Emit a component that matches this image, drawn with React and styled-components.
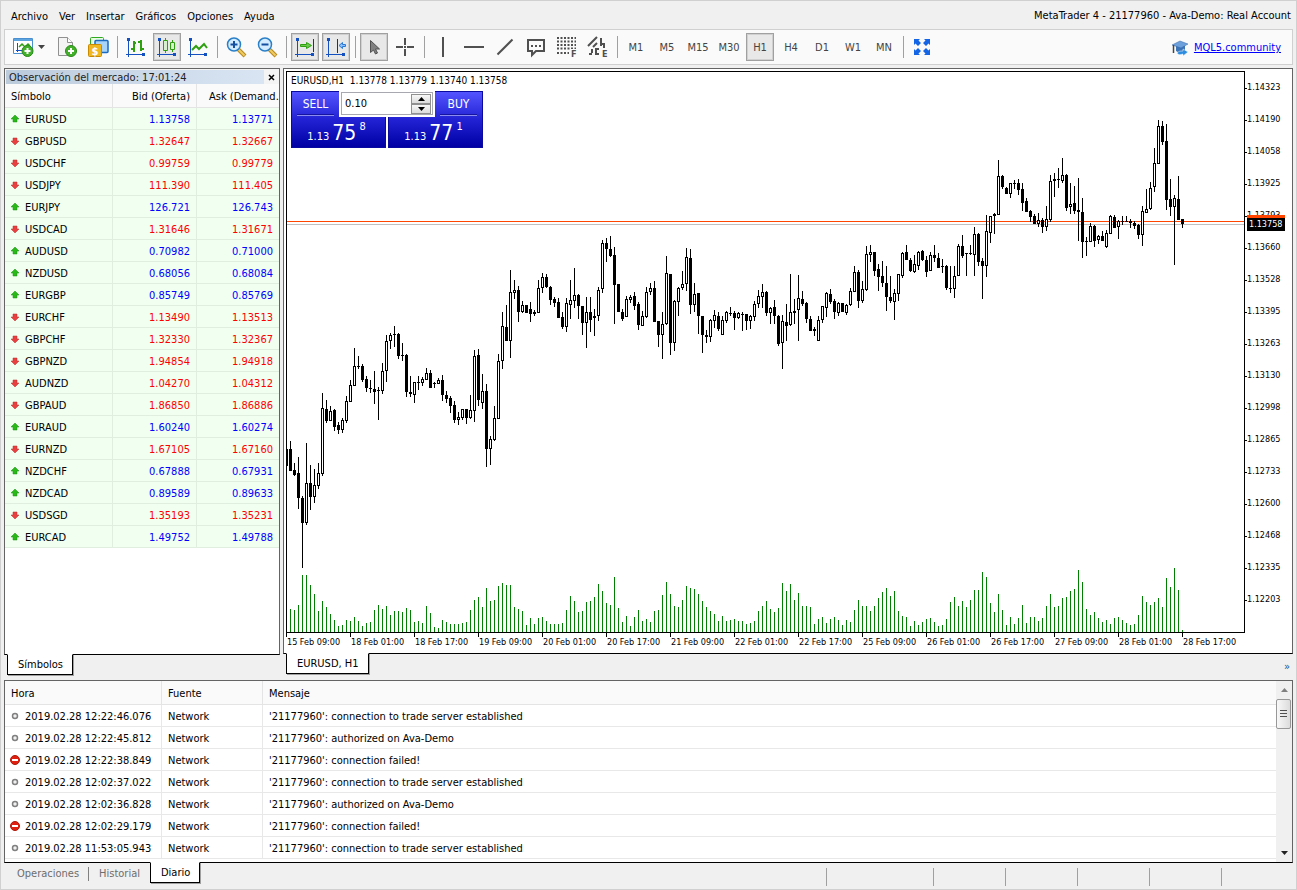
import React from "react";
import styled, { createGlobalStyle, css } from "styled-components";

const GlobalStyle = createGlobalStyle`
  * {
    box-sizing: border-box;
  }
  body {
    margin: 0;
    background: #f0f0f0;
    color: #000;
    font-family: "DejaVu Sans Condensed", Tahoma, sans-serif;
    font-size: 11px;
    line-height: 14px;
  }
  button, input {
    font: inherit;
    color: inherit;
  }
`;

const MENU = ["Archivo", "Ver", "Insertar", "Gráficos", "Opciones", "Ayuda"];
const TIMEFRAMES = ["M1", "M5", "M15", "M30", "H1", "H4", "D1", "W1", "MN"];

const SYMBOLS = [
  ["EURUSD", "1.13758", "1.13771", true],
  ["GBPUSD", "1.32647", "1.32667", false],
  ["USDCHF", "0.99759", "0.99779", false],
  ["USDJPY", "111.390", "111.405", false],
  ["EURJPY", "126.721", "126.743", true],
  ["USDCAD", "1.31646", "1.31671", false],
  ["AUDUSD", "0.70982", "0.71000", true],
  ["NZDUSD", "0.68056", "0.68084", true],
  ["EURGBP", "0.85749", "0.85769", true],
  ["EURCHF", "1.13490", "1.13513", false],
  ["GBPCHF", "1.32330", "1.32367", false],
  ["GBPNZD", "1.94854", "1.94918", false],
  ["AUDNZD", "1.04270", "1.04312", false],
  ["GBPAUD", "1.86850", "1.86886", false],
  ["EURAUD", "1.60240", "1.60274", true],
  ["EURNZD", "1.67105", "1.67160", false],
  ["NZDCHF", "0.67888", "0.67931", true],
  ["NZDCAD", "0.89589", "0.89633", true],
  ["USDSGD", "1.35193", "1.35231", false],
  ["EURCAD", "1.49752", "1.49788", true]
];

const LOG = [
  ["2019.02.28 12:22:46.076", "connection to trade server established"],
  ["2019.02.28 12:22:45.812", "authorized on Ava-Demo"],
  ["2019.02.28 12:22:38.849", "connection failed!"],
  ["2019.02.28 12:02:37.022", "connection to trade server established"],
  ["2019.02.28 12:02:36.828", "authorized on Ava-Demo"],
  ["2019.02.28 12:02:29.179", "connection failed!"],
  ["2019.02.28 11:53:05.943", "connection to trade server established"]
];

const PRICES = [
  "1.14323", "1.14190", "1.14058", "1.13925", "1.13793", "1.13660",
  "1.13528", "1.13395", "1.13263", "1.13130", "1.12998", "1.12865",
  "1.12733", "1.12600", "1.12468", "1.12335", "1.12203"
];

const TIMES = [
  "15 Feb 09:00", "18 Feb 01:00", "18 Feb 17:00", "19 Feb 09:00",
  "20 Feb 01:00", "20 Feb 17:00", "21 Feb 09:00", "22 Feb 01:00",
  "22 Feb 17:00", "25 Feb 09:00", "26 Feb 01:00", "26 Feb 17:00",
  "27 Feb 09:00", "28 Feb 01:00", "28 Feb 17:00"
];

// high, body top, body bottom, low, rising
const CANDLES = [
  [449,449,466,466,0],[441,449,471,471,0],[463,470,475,476,0],[457,473,498,509,0],[496,498,523,568,0],
  [443,483,523,525,1],[465,483,497,510,0],[469,485,497,503,1],[463,473,486,489,1],[393,408,474,476,1],
  [400,409,421,423,0],[406,411,421,421,1],[409,410,427,431,0],[422,425,430,434,0],[418,420,430,433,1],
  [396,401,421,423,1],[380,385,402,402,1],[348,366,386,386,1],[356,366,367,369,0],[364,366,380,382,0],
  [376,379,388,392,0],[380,388,389,393,0],[371,389,392,404,0],[387,390,391,420,0],[363,371,391,394,1],
  [335,341,371,382,1],[333,335,341,349,1],[326,334,335,347,0],[333,334,356,359,0],[343,355,356,361,0],
  [354,355,392,397,0],[376,392,394,397,0],[382,382,395,403,1],[376,382,383,390,0],[377,379,383,386,1],
  [368,373,380,380,1],[370,373,388,388,0],[382,383,384,388,0],[378,380,384,384,1],[375,380,395,401,0],
  [391,395,399,403,0],[396,398,406,413,0],[401,405,420,423,0],[412,417,420,425,1],[409,409,418,420,1],
  [409,409,418,424,0],[395,410,418,419,1],[350,356,411,422,1],[349,355,400,406,0],[374,391,403,409,1],
  [384,391,449,467,0],[436,439,449,465,1],[406,418,440,441,1],[354,361,419,419,1],[312,326,361,369,1],
  [305,327,341,341,0],[270,292,341,358,1],[280,290,293,299,1],[286,290,312,322,0],[301,305,312,313,1],
  [305,305,313,313,0],[302,309,314,322,0],[310,312,314,316,0],[280,288,313,313,1],[273,277,288,293,1],
  [274,277,287,288,0],[286,287,300,305,0],[297,299,303,307,0],[298,302,318,318,0],[312,317,327,329,0],
  [298,303,327,332,1],[280,300,305,319,1],[268,295,301,308,1],[294,295,306,319,0],[306,306,323,335,0],
  [297,312,323,348,1],[297,312,320,332,0],[309,316,318,336,0],[287,290,316,321,1],[240,243,289,293,1],
  [238,243,249,262,0],[236,249,256,257,0],[247,255,285,324,0],[284,284,312,312,0],[309,312,319,321,0],
  [296,299,317,317,1],[295,297,300,303,1],[292,296,306,310,0],[302,304,325,330,0],[311,316,326,326,1],
  [287,292,317,318,1],[283,288,292,295,1],[281,288,322,322,0],[321,321,335,347,0],[312,324,335,359,1],
  [256,273,324,325,1],[274,274,343,355,0],[300,301,343,351,1],[287,288,302,316,1],[271,284,288,290,1],
  [248,257,284,291,1],[249,258,305,314,0],[283,294,305,312,1],[293,293,316,334,0],[316,316,335,353,0],
  [330,335,337,343,0],[319,320,337,342,1],[310,315,321,328,1],[312,316,329,331,0],[316,320,335,335,1],
  [311,312,321,323,1],[307,313,314,316,0],[311,313,318,330,0],[312,313,318,319,1],[312,314,315,331,0],
  [314,314,321,330,0],[315,316,321,329,1],[301,304,317,321,1],[290,296,304,308,1],[284,292,297,308,1],
  [291,292,313,316,0],[307,308,313,324,1],[300,307,316,324,0],[315,316,344,346,0],[315,321,343,369,1],
  [304,322,326,341,0],[274,312,325,326,1],[299,311,313,324,0],[275,298,310,341,1],[291,299,304,306,0],
  [302,303,319,323,0],[316,319,331,331,0],[327,329,331,336,0],[316,320,341,341,1],[306,306,320,323,1],
  [292,293,308,317,1],[289,294,302,304,0],[299,301,312,319,0],[302,303,313,316,1],[303,303,312,312,0],
  [304,305,313,315,1],[288,291,305,306,1],[266,272,292,292,1],[270,272,301,308,0],[281,289,301,303,1],
  [246,254,290,291,1],[245,252,255,262,1],[252,252,271,276,0],[264,269,277,291,0],[261,276,283,287,0],
  [266,283,297,311,0],[276,297,301,303,0],[289,293,302,320,1],[274,274,294,301,1],[252,253,276,278,1],
  [245,252,260,260,0],[258,260,271,272,0],[255,264,272,273,1],[251,252,266,270,1],[250,251,260,261,0],
  [256,260,272,277,0],[252,255,271,271,1],[245,255,258,262,0],[253,258,268,268,0],[259,266,267,273,0],
  [265,266,288,290,0],[266,288,289,293,0],[266,276,289,298,1],[244,246,276,276,1],[235,246,256,258,0],
  [253,253,254,276,0],[245,253,254,255,0],[227,234,255,276,1],[233,234,262,266,0],[258,261,266,299,0],
  [215,231,266,277,1],[216,216,233,243,1],[213,214,216,234,0],[160,176,215,215,1],[175,176,187,189,0],
  [187,188,194,194,0],[183,183,194,198,1],[180,183,184,189,0],[179,183,190,195,0],[183,189,203,211,0],
  [198,201,212,212,0],[210,211,217,222,0],[214,216,224,224,0],[213,220,224,227,1],[218,220,227,233,0],
  [206,219,227,231,1],[175,181,220,222,1],[173,179,181,197,0],[168,179,180,188,0],[158,175,181,183,1],
  [174,175,208,211,0],[183,204,207,214,1],[186,203,211,214,0],[178,210,212,241,0],[198,212,242,258,0],
  [237,241,242,256,0],[223,226,242,242,1],[225,226,241,247,0],[235,236,240,244,1],[231,236,241,241,0],
  [230,233,247,248,1],[215,216,234,234,1],[215,217,228,228,0],[220,221,227,239,1],[216,221,222,225,0],
  [216,221,222,222,0],[219,221,223,228,0],[221,223,226,229,0],[224,225,235,239,0],[206,211,235,246,1],
  [189,209,213,213,1],[182,188,209,210,1],[148,163,187,192,1],[120,126,164,164,1],[121,126,142,145,0],
  [124,141,200,210,0],[179,199,207,216,0],[195,198,207,265,1],[176,199,220,220,0],[219,219,224,228,0]
];

const VOLUMES = [
  0,23,22,27,57,57,47,38,21,31,25,18,12,6,7,12,11,15,11,6,9,10,22,27,23,
  26,17,21,21,20,24,22,10,11,9,26,19,5,4,12,10,8,8,8,9,10,22,32,35,25,
  44,31,32,46,49,47,47,25,23,21,7,14,8,14,15,11,8,8,8,9,22,36,31,20,21,
  30,31,35,48,41,29,27,55,24,10,16,6,15,22,11,13,10,21,22,37,50,38,26,25,32,
  46,44,43,38,31,25,21,18,11,16,11,12,13,11,11,8,9,11,21,26,31,23,20,24,49,
  41,48,32,39,26,26,25,8,13,15,9,13,15,12,7,12,10,22,32,26,26,21,26,34,40,
  44,36,41,21,16,15,6,11,7,10,13,14,10,6,7,13,30,35,26,31,25,32,42,42,60,
  55,29,20,38,22,7,15,8,14,27,9,15,15,11,14,26,38,25,26,34,35,41,43,62,50,
  23,17,20,14,10,12,8,14,15,12,9,7,8,17,36,30,27,30,34,25,54,45,64,42,2
];

const Window = styled.div`
  display: flex;
  flex-direction: column;
  height: 100vh;
  min-height: 600px;
  border: 1px solid #d0d0d0;
  padding: 0 3px;
`;

const MenuBar = styled.header`
  display: flex;
  justify-content: space-between;
  align-items: center;
  height: 28px;
  padding: 2px 2px 0 7px;
`;

const MenuItems = styled.nav`
  display: flex;
  gap: 11px;
`;

const MenuItem = styled.button`
  border: 0;
  padding: 2px 0 0;
  background: none;
`;

const Toolbar = styled.div`
  display: flex;
  align-items: center;
  gap: 3px;
  height: 36px;
  padding: 0 11px 0 3px;
  border: 1px solid #d0d0d0;
  background: #fafafa;
  flex: none;
`;

const ToolButton = styled.button`
  display: flex;
  align-items: center;
  justify-content: center;
  gap: 5px;
  width: ${props => (props.$wide ? 42 : 28)}px;
  height: 28px;
  padding: 0;
  border: 1px solid transparent;
  background: none;
  color: #444;
  ${props =>
    props.$pressed &&
    css`
      border-color: #a0a0a0;
      background: #e8e8e8;
      box-shadow: inset 0 0 0 1px #d0d0d0;
    `}
`;

const PeriodButton = styled(ToolButton)`
  padding-top: 2px;
`;

const Separator = styled.span`
  width: 1px;
  height: 22px;
  margin: 0 1px 0 2px;
  background: #a0a0a0;
`;

const Community = styled.a`
  display: flex;
  align-items: center;
  gap: 5px;
  margin-left: auto;
  padding-top: 2px;
  color: #00f;
`;

const Workspace = styled.main`
  display: grid;
  grid-template-columns: 276px minmax(0, 1fr);
  gap: 3px;
  flex: 1;
  min-height: 0;
  padding-top: 3px;
`;

const Column = styled.section`
  display: flex;
  flex-direction: column;
  min-width: 0;
  min-height: 0;
`;

const Panel = styled.div`
  flex: 1;
  min-height: 0;
  overflow: hidden;
  border: 1px solid #646464;
  border-bottom-color: #000;
  background: #fff;
`;

const TabStrip = styled.div`
  display: flex;
  align-items: flex-start;
  flex: none;
  height: ${props => props.$height}px;
  padding-left: ${props => props.$inset}px;
`;

const Tab = styled.button`
  height: 21px;
  margin-top: -1px;
  padding: 1px 9px 0 10px;
  border: 1px solid #000;
  border-top-color: #fff;
  background: #fff;
  box-shadow: 1px 1px 0 #a0a0a0;
`;

const PlainTab = styled.button`
  height: 14px;
  margin-top: 4px;
  padding: 0 9px 0 10px;
  border: 0;
  border-right: 1px solid ${props => (props.$last ? "transparent" : "#808080")};
  background: none;
  color: #6d6d6d;
`;

const MoreButton = styled.button`
  margin: 6px 3px 0 auto;
  padding: 0;
  border: 0;
  background: none;
  color: #0a5a9c;
`;

const PanelTitle = styled.div`
  display: flex;
  justify-content: space-between;
  height: 15px;
  padding: 1px 0 0 1px;
  background: #f4f4f4;
  color: #222;
`;

const PanelName = styled.span`
  flex: 1;
  padding-left: 3px;
  background: linear-gradient(90deg, #bccbdc, #d9e5f3);
  line-height: 16px;
`;

const CloseButton = styled.button`
  display: flex;
  align-items: center;
  justify-content: center;
  width: 15px;
  padding: 0;
  border: 0;
  background: none;
`;

const Table = styled.table`
  width: 100%;
  border-collapse: separate;
  border-spacing: 0;
  table-layout: fixed;
`;

const Head = styled.th`
  height: 24px;
  padding: 2px 6px 0;
  border-bottom: 1px solid #e4e4e4;
  border-right: 1px solid #e4e4e4;
  background: #fafafa;
  font-weight: normal;
  text-align: ${props => props.$align || "left"};
  white-space: nowrap;
  overflow: hidden;
  &:last-child {
    border-right: 0;
  }
`;

const ClippedHead = styled(Head)`
  padding: 2px 1px 0 12px;
`;

const Cell = styled.td`
  height: 22px;
  padding: 2px 6px 0;
  border-bottom: 1px solid #e8e8e8;
  border-right: 1px solid #e8e8e8;
  white-space: nowrap;
  &:last-child {
    border-right: 0;
  }
`;

const QuoteCell = styled(Cell)`
  background: #f0fff0;
  border-color: #e0eee0;
`;

const PriceCell = styled(QuoteCell)`
  text-align: right;
  color: ${props => (props.$up ? "#00f" : "#f00")};
`;

const Marked = styled.span`
  display: flex;
  align-items: center;
  gap: 5px;
  margin-left: -1px;
  svg {
    flex: none;
    margin-bottom: 2px;
  }
`;

const ChartPanel = styled(Panel)`
  display: grid;
  grid-template-columns: minmax(0, 1fr) 47px;
  grid-template-rows: minmax(0, 1fr) 20px;
  padding: 2px 0 0 2px;
`;

const Plot = styled.div`
  position: relative;
  border: 1px solid #000;
  overflow: hidden;
`;

const Drawing = styled.svg`
  display: block;
  width: 100%;
  height: 100%;
`;

const ChartCaption = styled.div`
  position: absolute;
  left: 4px;
  top: 2px;
  font-size: 10px;
  white-space: pre;
`;

const PriceAxis = styled.ul`
  position: relative;
  margin: 0;
  padding: 1px 0 0;
  list-style: none;
  overflow: hidden;
`;

const PriceMark = styled.li`
  display: flex;
  height: 32px;
  font-size: 9px;
  line-height: 30px;
  &::before {
    content: "";
    width: 2px;
    height: 1px;
    margin-top: 16px;
    background: #000;
  }
`;

const PriceTag = styled.div`
  position: absolute;
  left: 2px;
  top: 144px;
  width: 38px;
  padding-left: 2px;
  border-top: 3px solid #ff4500;
  background: #000;
  color: #fff;
  font-size: 9px;
  line-height: 13px;
`;

const TimeAxis = styled.ul`
  display: flex;
  grid-column: 1 / 3;
  margin: 0;
  padding: 0;
  list-style: none;
`;

const TimeMark = styled.li`
  flex: none;
  width: 64px;
  padding: 2px 0 0 1px;
  font-size: 9px;
  line-height: 14px;
  white-space: nowrap;
  background: linear-gradient(#000, #000) 0 0 / 1px 4px no-repeat;
`;

const TradePanel = styled.div`
  position: absolute;
  left: 4px;
  top: 19px;
  display: flex;
  gap: 2px;
  background: #fff;
`;

const TradeButton = styled.button`
  display: flex;
  flex-direction: column;
  align-items: ${props => (props.$right ? "flex-end" : "flex-start")};
  width: 95px;
  height: 57px;
  padding: 0;
  border: 1px solid #0a0aa0;
  background: linear-gradient(#5454ff, #2222d4 50%, #0000a4);
  color: #fff;
`;

const TradeSide = styled.span`
  width: 37px;
  height: 24px;
  margin: 0 5px;
  border-bottom: 1px solid #8c8cf0;
  box-shadow: inset 0 -1px 0 #1414a0;
  font-size: 12px;
  line-height: 24px;
`;

const TradePrice = styled.span`
  display: flex;
  align-items: flex-end;
  justify-content: center;
  gap: 3px;
  align-self: stretch;
  height: 30px;
  padding-right: 4px;
  line-height: 18px;
`;

const Pips = styled.b`
  font-size: 21px;
  font-weight: normal;
  line-height: 26px;
`;

const Point = styled.sup`
  align-self: flex-start;
  font-size: 11px;
  line-height: 22px;
`;

const VolumeBox = styled.label`
  position: absolute;
  left: 48px;
  top: 0;
  display: flex;
  width: 96px;
  height: 26px;
  border: 2px solid #fff;
  border-top-width: 1px;
  background: #fff;
  box-shadow: inset 0 0 0 1px #a8a8b0;
  padding: 2px 2px 1px;
`;

const VolumeInput = styled.input`
  width: 68px;
  padding: 0 0 0 2px;
  border: 0;
  background: none;
  outline: 0;
`;

const Spinner = styled.span`
  display: flex;
  flex-direction: column;
  width: 20px;
  button {
    display: flex;
    align-items: center;
    justify-content: center;
    height: 10px;
    padding: 0;
    border: 1px solid #909090;
    background: linear-gradient(#f8f8f8, #dcdcdc);
  }
`;

const Journal = styled(Panel)`
  display: flex;
  flex: none;
  height: 183px;
`;

const TableArea = styled.div`
  flex: 1;
  overflow: hidden;
`;

const ScrollBar = styled.div`
  display: flex;
  flex-direction: column;
  width: 16px;
  background: #f0f0f0;
`;

const ScrollArrow = styled.button`
  display: flex;
  align-items: center;
  justify-content: center;
  height: 18px;
  padding: 0;
  border: 0;
  background: none;
  color: ${props => (props.$dim ? "#808080" : "#222")};
`;

const Thumb = styled.div`
  display: flex;
  align-items: center;
  justify-content: center;
  height: 30px;
  width: 15px;
  margin-bottom: auto;
  border: 1px solid #989898;
  border-radius: 2px;
  background: linear-gradient(90deg, #f8f8f8, #dcdcdc);
`;

const StatusCells = styled.div`
  display: flex;
  align-self: stretch;
  margin-left: auto;
  padding: 5px 0 3px;
`;

const StatusCell = styled.span`
  width: ${props => props.$width}px;
  border-left: 1px solid #a0a0a0;
`;

const Glyph = styled.svg`
  overflow: visible;
`;

const BLUE = "#1450c0";
const GREEN = "#2ea010";
const GRAY = "#505050";

const Icon = ({ size = 20, children }) => (
  <Glyph width={size} height={size} viewBox={`0 0 ${size} ${size}`} fill="none" aria-hidden="true">
    {children}
  </Glyph>
);

const Triangle = ({ up }) => (
  <svg width="7" height="4" viewBox="0 0 7 4" fill="currentColor" aria-hidden="true">
    <path d={up ? "M0 4L3.5 0L7 4z" : "M0 0h7L3.5 4z"} />
  </svg>
);

const Axes = () => (
  <g fill={BLUE}>
    <path d="M2 2h1v18H2z" />
    <path d="M0 17h18v1H0z" />
    <path d="M1 1h3v3H1zM16 16h3v3h-3z" />
  </g>
);

const Plus = ({ cx, cy }) => (
  <g>
    <circle cx={cx} cy={cy} r="5.5" fill="#43b02a" stroke="#2a8a18" />
    <path d={`M${cx - 3} ${cy}h6M${cx} ${cy - 3}v6`} stroke="#fff" strokeWidth="2" />
  </g>
);

const NewChartIcon = () => (
  <Icon>
    <path d="M.5 1.500h19v15h-19z" fill="#fff" stroke="#4a90d0" />
    <path d="M1 2h18v2H1z" fill="#5ba4e0" />
    <path d="M4.500 6v9M3 13.500h13" stroke={BLUE} />
    <path d="M6 10l3-3 3 3 3-3 2 2" stroke={GREEN} strokeWidth="1.500" />
    <Plus cx={14.5} cy={14} />
  </Icon>
);

const NewOrderIcon = () => (
  <Icon>
    <path d="M1.500 .5h9l5 5v13h-14z" fill="#f4f4f4" stroke="#909090" />
    <path d="M10.500 .5v5h5" fill="#fff" stroke="#909090" />
    <Plus cx={14} cy={14} />
  </Icon>
);

const AccountsIcon = () => (
  <Icon>
    <rect x="2.500" y=".5" width="13" height="11" rx="1" fill="#e8ffe0" stroke="#30a820" />
    <rect x="7" y="3.500" width="13" height="12" rx="1" fill="#a8d4fa" stroke="#1a6ac0" strokeWidth="1.500" />
    <rect x=".5" y="7.500" width="13" height="12" rx="1" fill="#f0b820" stroke="#c88a00" />
    <text x="7" y="17.500" fill="#fff" fontSize="11" fontWeight="bold" textAnchor="middle">
      $
    </text>
  </Icon>
);

const BarsIcon = () => (
  <Icon>
    <Axes />
    <path d="M8 4v11M5 12h3M8 6h2M15 3v11M12 5h3M15 12h3" stroke={GREEN} strokeWidth="2" />
  </Icon>
);

const CandlesIcon = () => (
  <Icon>
    <Axes />
    <path d="M8.500 1v15M15.500 3v12" stroke={GREEN} />
    <path d="M6.500 3.500h4v10h-4zM13.500 5.500h4v7h-4z" fill="#d8f0d0" stroke={GREEN} />
  </Icon>
);

const LineIcon = () => (
  <Icon>
    <Axes />
    <path d="M4 13l4-4 3 3 5-5 3 4" stroke={GREEN} strokeWidth="2" />
  </Icon>
);

const ZoomIcon = ({ plus }) => (
  <Icon>
    <path d="M12 12l7 7" stroke="#b88a20" strokeWidth="4" />
    <path d="M12 12l6.500 6.500" stroke="#f0cc60" strokeWidth="2" />
    <circle cx="8" cy="7.500" r="6.500" fill="#d4ecff" stroke="#2a80c8" strokeWidth="1.500" />
    <path d="M4.500 7.500h7" stroke="#1450a0" strokeWidth="2" />
    {plus && <path d="M8 4v7" stroke="#1450a0" strokeWidth="2" />}
  </Icon>
);

const AutoScrollIcon = () => (
  <Icon>
    <Axes />
    <path d="M18.500 2v13" stroke="#333" />
    <path d="M5.500 7.500h6v-2l5 3-5 3v-2h-6z" fill="#6cc84c" stroke={GREEN} />
  </Icon>
);

const ShiftIcon = () => (
  <Icon>
    <Axes />
    <path d="M11.500 2v14" stroke="#333" />
    <path d="M19.500 7.500h-3v-2l-3.500 3 3.500 3v-2h3z" fill="#8cc0ff" stroke="#2878d8" />
  </Icon>
);

const CursorIcon = () => (
  <Icon>
    <path d="M6.500 3.500v12l3-2.500 2 4 2-1-2-4h4z" fill="#808080" stroke={GRAY} />
  </Icon>
);

const CrosshairIcon = () => (
  <Icon>
    <path d="M10 1v7M10 12v7M1 10h7M12 10h7" stroke={GRAY} strokeWidth="2" />
    <path d="M9 9h2v2H9z" fill={GRAY} />
  </Icon>
);

const VerticalIcon = () => (
  <Icon>
    <path d="M10 0v20" stroke={GRAY} strokeWidth="2" />
  </Icon>
);

const HorizontalIcon = () => (
  <Icon>
    <path d="M0 10h20" stroke={GRAY} strokeWidth="2" />
  </Icon>
);

const TrendIcon = () => (
  <Icon>
    <path d="M2.500 17.500l15-15" stroke={GRAY} strokeWidth="2" />
  </Icon>
);

const LabelIcon = () => (
  <Icon>
    <path d="M2 3h16v11h-8l-4 4v-4H2z" stroke={GRAY} strokeWidth="2" />
    <path d="M5 8h2v2H5zM9 8h2v2H9zM13 8h2v2h-2z" fill={GRAY} />
  </Icon>
);

const FibonacciIcon = () => (
  <Icon>
    <path
      d="M0 1h19M0 4.500h19M0 8h19M0 11.500h19M0 16h12"
      stroke={GRAY}
      strokeWidth="2"
      strokeDasharray="2 1.500"
    />
    <path d="M13 12h7v8h-7z" fill="#fafafa" />
    <text x="14" y="20" fill={GRAY} fontSize="9" fontWeight="bold">
      F
    </text>
  </Icon>
);

const ElliottIcon = () => (
  <Icon>
    <path d="M0 9l9-9M5 10l4-4" stroke={GRAY} strokeWidth="2" />
    <path d="M13 1v8M13 7h3M16 6v5M4 12v4M1 17h3M8 11v7M8 12h3M8 17h3" stroke={GRAY} strokeWidth="2" />
    <text x="14" y="20" fill={GRAY} fontSize="9" fontWeight="bold">
      E
    </text>
  </Icon>
);

const FullScreenIcon = () => (
  <Icon size={16}>
    <path
      d="M0 0h6L4.500 1.500 7 4 4 7 1.500 4.500 0 6zM16 0v6l-1.500-1.500L12 7 9 4l2.500-2.500L10 0zM0 16v-6l1.500 1.500L4 9l3 3-2.500 2.500L6 16zM16 16h-6l1.500-1.500L9 12l3-3 2.500 2.500L16 10z"
      fill="#1464e6"
    />
  </Icon>
);

const CommunityIcon = () => (
  <Icon size={17}>
    <path d="M4 6h9v5c-3 2-6 2-9 0z" fill="#3c74b8" />
    <path d="M0 5l8-4 8 3-7 4z" fill="#6ca0dc" stroke="#3464a4" strokeWidth=".5" />
    <path d="M1.500 5v8" stroke="#444" strokeWidth="1.500" />
    <path d="M5 13c1 2 3 2 6 1v2l5-4-5-3v2c-3 0-4 0-6 2z" fill="#2c8ce0" stroke="#fff" strokeWidth=".5" />
  </Icon>
);

const DirectionIcon = ({ up }) => (
  <Icon size={10}>
    <path
      d={up ? "M5 1l4 4H7v3H3V5H1z" : "M5 9l4-4H7V2H3v3H1z"}
      fill={up ? "#28b818" : "#e84040"}
      stroke={up ? "#189010" : "#c02828"}
      strokeWidth=".5"
    />
  </Icon>
);

const InfoIcon = () => (
  <Icon size={10}>
    <circle cx="5" cy="5" r="2.500" fill="#f0f0f0" stroke="#808080" strokeWidth="1.500" />
  </Icon>
);

const ErrorIcon = () => (
  <Icon size={10}>
    <circle cx="5" cy="5" r="4.500" fill="#e02010" stroke="#b01808" />
    <path d="M2 4h6v2H2z" fill="#fff" />
  </Icon>
);

const TOOLS = [
  { name: "Plantillas", icon: <AccountsIcon /> },
  null,
  { name: "Barras", icon: <BarsIcon /> },
  { name: "Velas", icon: <CandlesIcon />, pressed: true },
  { name: "Línea", icon: <LineIcon /> },
  null,
  { name: "Acercar", icon: <ZoomIcon plus /> },
  { name: "Alejar", icon: <ZoomIcon /> },
  null,
  { name: "Desplazamiento automático", icon: <AutoScrollIcon />, pressed: true },
  { name: "Desplazar gráfico", icon: <ShiftIcon />, pressed: true },
  null,
  { name: "Cursor", icon: <CursorIcon />, pressed: true },
  { name: "Cruz", icon: <CrosshairIcon /> },
  null,
  { name: "Línea vertical", icon: <VerticalIcon /> },
  { name: "Línea horizontal", icon: <HorizontalIcon /> },
  { name: "Línea de tendencia", icon: <TrendIcon /> },
  { name: "Texto", icon: <LabelIcon /> },
  { name: "Fibonacci", icon: <FibonacciIcon /> },
  { name: "Elliott", icon: <ElliottIcon /> },
  null
];

const STEP = 4;
const ORIGIN = { x: 287, y: 72 };
const FIRST_BAR = 286;
const BASELINE = 632;

const box = (x, top, w, bottom) => `M${x} ${top}h${w}V${bottom}h${-w}z`;

const bars = CANDLES.map(([high, top, bottom, low], i) => {
  const x = FIRST_BAR + i * STEP;
  return box(x, high, 1, low) + box(x - 1, top, 3, bottom);
}).join("");

const hollows = CANDLES.map(([, top, bottom, , rising], i) =>
  rising ? box(FIRST_BAR + i * STEP, top + 1, 1, bottom - 1) : ""
).join("");

const volumes = VOLUMES.map((v, i) =>
  box(FIRST_BAR + i * STEP, BASELINE - v, 1, BASELINE)
).join("");

const Chart = () => (
  <Drawing shapeRendering="crispEdges" role="img" aria-label="EURUSD, H1">
    <g transform={`translate(${-ORIGIN.x} ${-ORIGIN.y})`}>
      <path d={volumes} fill="#008000" />
    </g>
    <rect x="0" y="149" width="100%" height="1" fill="#ff4500" />
    <rect x="0" y="152" width="100%" height="1" fill="#c0c0c0" />
    <g transform={`translate(${-ORIGIN.x} ${-ORIGIN.y})`}>
      <path d={bars} fill="#000" fillRule="nonzero" />
      <path d={hollows} fill="#fff" />
    </g>
  </Drawing>
);

const OneClickTrading = () => {
  const [volume, setVolume] = React.useState("0.10");
  const step = delta => () =>
    setVolume(v => Math.max(0.01, Number(v) + delta).toFixed(2));

  return (
    <TradePanel>
      <TradeButton>
        <TradeSide>SELL</TradeSide>
        <TradePrice>
          1.13 <Pips>75</Pips> <Point>8</Point>
        </TradePrice>
      </TradeButton>
      <TradeButton $right>
        <TradeSide>BUY</TradeSide>
        <TradePrice>
          1.13 <Pips>77</Pips> <Point>1</Point>
        </TradePrice>
      </TradeButton>
      <VolumeBox>
        <VolumeInput
          aria-label="Volumen"
          value={volume}
          onChange={e => setVolume(e.target.value)}
        />
        <Spinner>
          <button aria-label="Más" onClick={step(0.01)}>
            <Triangle up />
          </button>
          <button aria-label="Menos" onClick={step(-0.01)}>
            <Triangle />
          </button>
        </Spinner>
      </VolumeBox>
    </TradePanel>
  );
};

const MarketWatch = () => (
  <Column>
    <Panel>
      <PanelTitle>
        <PanelName>Observación del mercado: 17:01:24</PanelName>
        <CloseButton aria-label="Cerrar">
          <svg width="7" height="7" viewBox="0 0 7 7" aria-hidden="true">
            <path d="M1 1l5 5M6 1L1 6" stroke="#000" strokeWidth="1.500" />
          </svg>
        </CloseButton>
      </PanelTitle>
      <Table>
        <colgroup>
          <col width="108" />
          <col width="84" />
          <col />
        </colgroup>
        <thead>
          <tr>
            <Head>Símbolo</Head>
            <Head $align="right">Bid (Oferta)</Head>
            <ClippedHead>Ask (Demand.</ClippedHead>
          </tr>
        </thead>
        <tbody>
          {SYMBOLS.map(([symbol, bid, ask, up]) => (
            <tr key={symbol}>
              <QuoteCell>
                <Marked>
                  <DirectionIcon up={up} />
                  {symbol}
                </Marked>
              </QuoteCell>
              <PriceCell $up={up}>{bid}</PriceCell>
              <PriceCell $up={up}>{ask}</PriceCell>
            </tr>
          ))}
        </tbody>
      </Table>
    </Panel>
    <TabStrip $height={25} $inset={3}>
      <Tab>Símbolos</Tab>
    </TabStrip>
  </Column>
);

const ChartWindow = () => (
  <Column>
    <ChartPanel>
      <Plot>
        <Chart />
        <ChartCaption>
          {"EURUSD,H1  1.13778 1.13779 1.13740 1.13758"}
        </ChartCaption>
        <OneClickTrading />
      </Plot>
      <PriceAxis>
        {PRICES.map(price => (
          <PriceMark key={price}>{price}</PriceMark>
        ))}
        <PriceTag as="li">1.13758</PriceTag>
      </PriceAxis>
      <TimeAxis>
        {TIMES.map(time => (
          <TimeMark key={time}>{time}</TimeMark>
        ))}
      </TimeAxis>
    </ChartPanel>
    <TabStrip $height={26} $inset={3}>
      <Tab>EURUSD, H1</Tab>
      <MoreButton>»</MoreButton>
    </TabStrip>
  </Column>
);

const Terminal = () => (
  <>
    <Journal>
      <TableArea>
        <Table>
          <colgroup>
            <col width="157" />
            <col width="101" />
            <col />
          </colgroup>
          <thead>
            <tr>
              <Head>Hora</Head>
              <Head>Fuente</Head>
              <Head>Mensaje</Head>
            </tr>
          </thead>
          <tbody>
            {LOG.map(([time, message]) => (
              <tr key={time}>
                <Cell>
                  <Marked>
                    {message.includes("failed") ? <ErrorIcon /> : <InfoIcon />}
                    {time}
                  </Marked>
                </Cell>
                <Cell>Network</Cell>
                <Cell>'21177960': {message}</Cell>
              </tr>
            ))}
          </tbody>
        </Table>
      </TableArea>
      <ScrollBar>
        <ScrollArrow $dim aria-label="Arriba">
          <Triangle up />
        </ScrollArrow>
        <Thumb>
          <svg width="7" height="8" viewBox="0 0 7 8" aria-hidden="true">
            <path d="M0 .5h7M0 3.500h7M0 6.500h7" stroke="#505050" />
          </svg>
        </Thumb>
        <ScrollArrow aria-label="Abajo">
          <Triangle />
        </ScrollArrow>
      </ScrollBar>
    </Journal>
    <TabStrip as="footer" $height={26} $inset={3}>
      <PlainTab>Operaciones</PlainTab>
      <PlainTab $last>Historial</PlainTab>
      <Tab>Diario</Tab>
      <StatusCells>
        {[107, 72, 72, 72, 72, 72].map((width, i) => (
          <StatusCell key={i} $width={width} />
        ))}
      </StatusCells>
    </TabStrip>
  </>
);

const App = () => (
  <Window>
    <GlobalStyle />
    <MenuBar>
      <MenuItems>
        {MENU.map(item => (
          <MenuItem key={item}>{item}</MenuItem>
        ))}
      </MenuItems>
      <span>MetaTrader 4 - 21177960 - Ava-Demo: Real Account</span>
    </MenuBar>
    <Toolbar>
      <ToolButton $wide aria-label="Nuevo gráfico">
        <NewChartIcon />
        <Triangle />
      </ToolButton>
      <ToolButton aria-label="Nueva orden">
        <NewOrderIcon />
      </ToolButton>
      {TOOLS.map((tool, i) =>
        tool ? (
          <ToolButton key={tool.name} $pressed={tool.pressed} aria-label={tool.name}>
            {tool.icon}
          </ToolButton>
        ) : (
          <Separator key={i} />
        )
      )}
      {TIMEFRAMES.map(tf => (
        <PeriodButton key={tf} $pressed={tf === "H1"}>
          {tf}
        </PeriodButton>
      ))}
      <Separator />
      <ToolButton aria-label="Pantalla completa">
        <FullScreenIcon />
      </ToolButton>
      <Community href="#community">
        <CommunityIcon />
        MQL5.community
      </Community>
    </Toolbar>
    <Workspace>
      <MarketWatch />
      <ChartWindow />
    </Workspace>
    <Terminal />
  </Window>
);

export default App;
